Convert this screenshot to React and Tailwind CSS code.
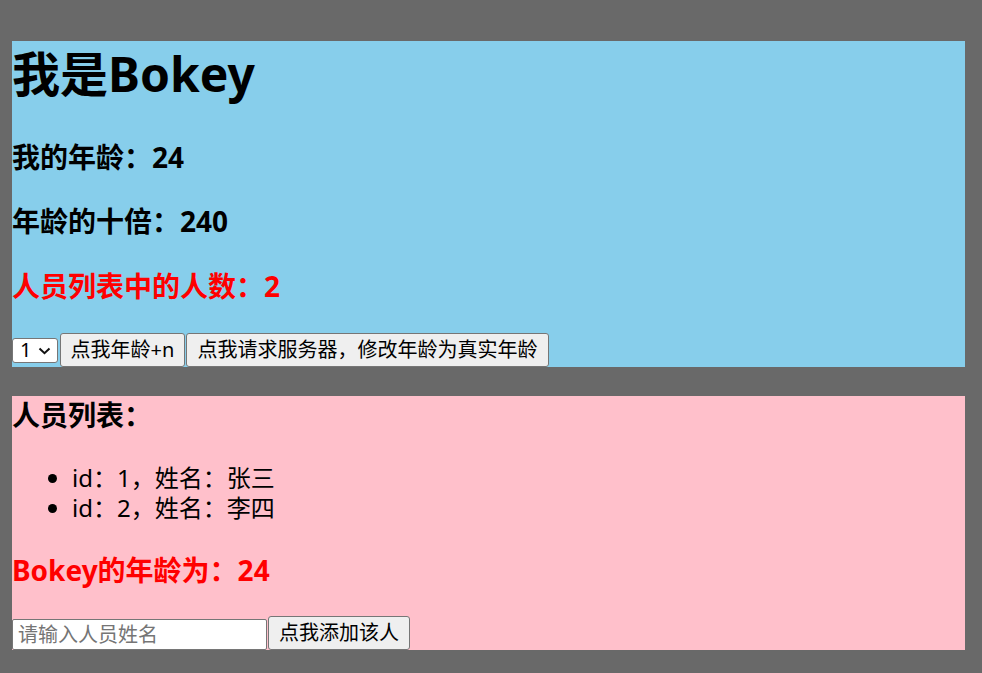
import React from "react";

const FONT = { fontFamily: '"Noto Sans", "Noto Sans CJK SC", sans-serif' };

const people = [
  { id: 1, name: "张三" },
  { id: 2, name: "李四" },
];

function Chevron() {
  return (
    <svg width="13" height="8" viewBox="0 0 13 8" className="pointer-events-none absolute left-[26px] top-[9px]">
      <path d="M1.5 1.5 L6.5 6.2 L11.5 1.5" fill="none" stroke="#111" strokeWidth="2" />
    </svg>
  );
}

function Btn({ children, className = "" }) {
  return (
    <button
      className={
        "flex h-[34px] shrink-0 items-center justify-center whitespace-nowrap rounded-[3px] border border-[#767676] bg-[#efefef] px-0 text-[20px] leading-none text-black " +
        className
      }
    >
      {children}
    </button>
  );
}

export default function App() {
  return (
    <div className="min-h-[673px] bg-[#696969] pl-[12px] pr-[17px] pt-[41px] text-black" style={FONT}>
      {/* Count panel */}
      <div className="bg-[#87ceeb]">
        <h1 className="text-[48px] font-bold leading-[66px]">我是Bokey</h1>
        <h3 className="mt-[31px] text-[28px] font-bold leading-[39px]">我的年龄：24</h3>
        <h3 className="mt-[25px] text-[28px] font-bold leading-[39px]">年龄的十倍：240</h3>
        <h3 className="mt-[26px] text-[28px] font-bold leading-[39px] text-[#ff0000]">人员列表中的人数：2</h3>
        <div className="mt-[27px] flex items-center">
          <div className="relative shrink-0">
            <select
              defaultValue="1"
              className="block h-[25px] w-[46px] appearance-none rounded-[3px] border border-[#767676] bg-white pl-[7px] text-[20px] leading-none text-black"
            >
              <option value="1">1</option>
              <option value="2">2</option>
              <option value="3">3</option>
            </select>
            <Chevron />
          </div>
          <Btn className="ml-[2px] w-[125px]">点我年龄+n</Btn>
          <Btn className="ml-[1px] w-[363px]">点我请求服务器，修改年龄为真实年龄</Btn>
        </div>
      </div>

      {/* Person panel */}
      <div className="mt-[29px] bg-[#ffc0cb]">
        <h3 className="text-[28px] font-bold leading-[39px]">人员列表：</h3>
        <ul className="mt-[28px] list-disc pl-[60px] text-[24px] leading-[30px]">
          {people.map((p) => (
            <li key={p.id}>
              id：{p.id}，姓名：{p.name}
            </li>
          ))}
        </ul>
        <h3 className="mt-[28px] text-[28px] font-bold leading-[39px] text-[#ff0000]">Bokey的年龄为：24</h3>
        <div className="mt-[26px] flex items-end">
          <input
            type="text"
            placeholder="请输入人员姓名"
            className="h-[31px] w-[255px] shrink-0 rounded-[2px] border border-[#767676] bg-white px-[5px] text-[20px] leading-none text-black placeholder:text-[#757575]"
          />
          <Btn className="ml-[1px] w-[142px]">点我添加该人</Btn>
        </div>
      </div>
    </div>
  );
}
